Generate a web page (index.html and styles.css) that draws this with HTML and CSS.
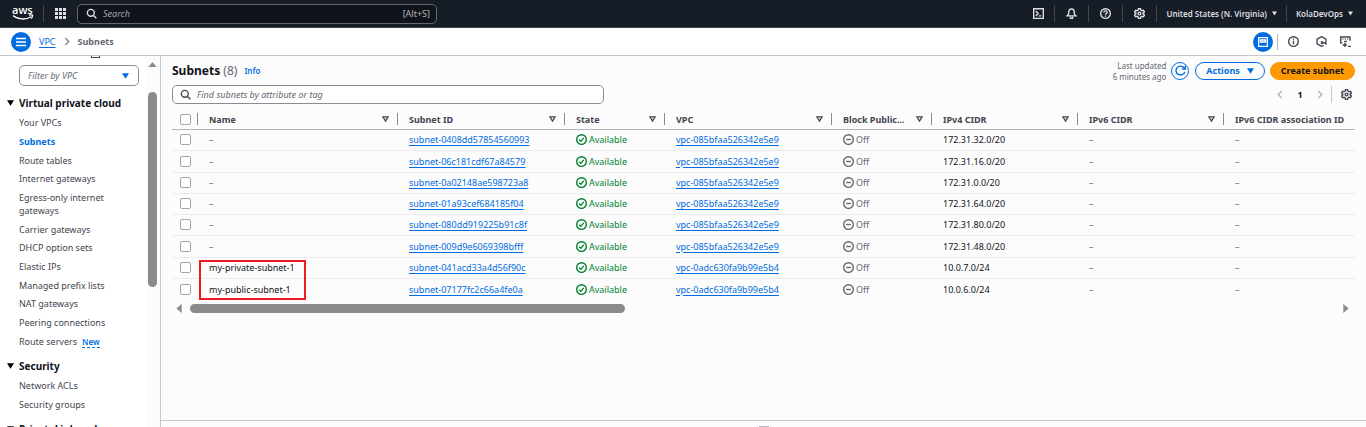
FILE: index.html
```html
<!DOCTYPE html>
<html lang="en">
<head>
<meta charset="utf-8">
<title>Subnets | VPC Console</title>
<link rel="stylesheet" href="styles.css">
</head>
<body>
<svg class="defs" aria-hidden="true">
  <symbol id="search" viewBox="0 0 16 16"><circle cx="7" cy="7" r="5"/><path d="M11 11l4 4"/></symbol>
  <symbol id="gear" viewBox="0 0 16 16"><path d="M6.500 1h3l.5 2 1.800 1 2-.6 1.500 2.600L13.300 7.500v1L15.300 10l-1.500 2.600-2-.6L10 13l-.5 2h-3l-.5-2-1.800-1-2 .6L.7 10l2-1.500v-1L.7 6l1.500-2.600 2 .6L6 3z"/><circle cx="8" cy="8" r="2"/></symbol>
  <symbol id="down" viewBox="0 0 10 8"><path d="M0 0h10L5 8z"/></symbol>
  <symbol id="filter" viewBox="0 0 16 14"><path d="M2 2h12L8 12z"/></symbol>
  <symbol id="ok" viewBox="0 0 16 16"><circle cx="8" cy="8" r="7"/><path d="M4.500 8.200l2.500 2.500 4.300-5"/></symbol>
  <symbol id="off" viewBox="0 0 16 16"><circle cx="8" cy="8" r="7"/><path d="M4.500 8h7"/></symbol>
  <symbol id="next" viewBox="0 0 16 16"><path d="M4.500 1l7 7-7 7"/></symbol>
  <symbol id="prev" viewBox="0 0 16 16"><path d="M11.500 1l-7 7 7 7"/></symbol>
</svg>

<header class="topbar">
  <a class="logo" href="#" aria-label="AWS home">
    <svg viewBox="0 0 22 16"><text x="0" y="9">aws</text><path class="smile" d="M1 10.500c5 4.300 13 4.500 18 1.200"/><path class="smile" d="M17 10.200c2.200-.5 3.800-.4 3.600.2s-.3 2.200-1.300 3.200"/></svg>
  </a>
  <button class="apps" aria-label="Services"><svg viewBox="0 0 11 11"><path d="M0 0h3v3H0zM4 0h3v3H4zM8 0h3v3H8zM0 4h3v3H0zM4 4h3v3H4zM8 4h3v3H8zM0 8h3v3H0zM4 8h3v3H4zM8 8h3v3H8z"/></svg></button>
  <div class="global-search">
    <svg class="ico"><use href="#search"/></svg>
    <input type="search" placeholder="Search" aria-label="Search">
    <kbd>[Alt+S]</kbd>
  </div>
  <nav class="tools" aria-label="Account">
    <button class="tool" aria-label="CloudShell"><svg class="ico" viewBox="0 0 16 16"><path d="M1 1h14v14H1zM4 4.500L7.500 8 4 11.500M8.500 11.500H12"/></svg></button>
    <button class="tool" aria-label="Notifications"><svg class="ico" viewBox="0 0 16 16"><path d="M8 1.500c-3 0-4 2-4 4.500v2.500L1.500 11.500h13L12 8.500V6c0-2.500-1-4.500-4-4.500z"/><path d="M6.500 12.500v2.500h3v-2.500"/></svg></button>
    <button class="tool" aria-label="Help"><svg class="ico" viewBox="0 0 16 16"><circle cx="8" cy="8" r="7"/><path d="M5.500 6.500C5.500 3.500 10.500 3.500 10.500 6.500c0 1.500-2.500 1.700-2.500 3.300M8 11v1.800"/></svg></button>
    <button class="tool" aria-label="Settings"><svg class="ico"><use href="#gear"/></svg></button>
    <button class="tool wide">United States (N. Virginia)<svg class="caret"><use href="#down"/></svg></button>
    <button class="tool wide">KolaDevOps<svg class="caret"><use href="#down"/></svg></button>
  </nav>
</header>

<div class="crumbbar">
  <button class="round" aria-label="Toggle navigation"><svg viewBox="0 0 10 10"><path d="M0 1.500h10M0 5h10M0 8.500h10"/></svg></button>
  <nav class="crumbs" aria-label="Breadcrumb">
    <a href="#">VPC</a>
    <svg class="chev"><use href="#next"/></svg>
    <span>Subnets</span>
  </nav>
  <div class="panels">
    <button class="round" aria-label="Split panel"><svg viewBox="0 0 10 10"><path d="M.5.500h9v9h-9zM2.500 3h5v2h-5z"/></svg></button>
    <button class="panel first" aria-label="Info"><svg class="ico" viewBox="0 0 16 16"><circle cx="8" cy="8" r="7"/><path d="M8 7v5M8 3.800v1.700"/></svg></button>
    <button class="panel" aria-label="Assistant"><svg class="ico" viewBox="0 0 16 16"><path d="M11 13.500L8 15l-6.500-3.500v-7L8 1l6.500 3.500v7L8 8"/><path d="M8 8v3l3-1"/></svg></button>
    <button class="panel" aria-label="Tutorials"><svg class="ico" viewBox="0 0 16 16"><path d="M3.500 10H1V1.500h13.500V7M3.500 4.500h1.500M7 4.500h1.500M10.500 4.500H12M6 8h4M4 13h4.500M6.500 10.500L9 13l-2.500 2.500M11.500 15H16"/></svg></button>
  </div>
</div>

<div class="layout">
  <aside class="sidebar">
    <div class="side-content">
      <div class="cut-icon"></div>
      <div class="vpc-filter">
        <select aria-label="Filter by VPC"><option>Filter by VPC</option></select>
        <svg><use href="#down"/></svg>
      </div>
      <h2><svg><use href="#down"/></svg>Virtual private cloud</h2>
      <ul>
        <li><a href="#">Your VPCs</a></li>
        <li><a href="#" class="current">Subnets</a></li>
        <li><a href="#">Route tables</a></li>
        <li><a href="#">Internet gateways</a></li>
        <li><a href="#">Egress-only internet gateways</a></li>
        <li><a href="#">Carrier gateways</a></li>
        <li><a href="#">DHCP option sets</a></li>
        <li><a href="#">Elastic IPs</a></li>
        <li><a href="#">Managed prefix lists</a></li>
        <li><a href="#">NAT gateways</a></li>
        <li><a href="#">Peering connections</a></li>
        <li><a href="#">Route servers</a><a href="#" class="new">New</a></li>
      </ul>
      <h2><svg><use href="#down"/></svg>Security</h2>
      <ul>
        <li><a href="#">Network ACLs</a></li>
        <li><a href="#">Security groups</a></li>
      </ul>
      <h2><svg><use href="#down"/></svg>PrivateLink and</h2>
    </div>
    <div class="vscroll"><svg viewBox="0 0 10 6"><path d="M0 6h10L5 0z"/></svg><i></i></div>
  </aside>

  <div class="column">
    <main class="main">
      <div class="head">
        <h1>Subnets <span>(8)</span></h1>
        <a class="info" href="#">Info</a>
        <p class="updated">Last updated<br>6 minutes ago</p>
        <button class="refresh" aria-label="Refresh"><svg class="ico" viewBox="0 0 16 16"><path d="M14.200 10A6.500 6.500 0 1 1 13.200 4.200L14.500 6M15 1v5h-5"/></svg></button>
        <button class="btn">Actions<svg class="caret"><use href="#down"/></svg></button>
        <button class="btn primary">Create subnet</button>
      </div>
      <div class="controls">
        <div class="find">
          <svg class="ico"><use href="#search"/></svg>
          <input type="search" placeholder="Find subnets by attribute or tag" aria-label="Find subnets">
        </div>
        <div class="pager">
          <button aria-label="Previous page"><svg class="chev"><use href="#prev"/></svg></button>
          <button class="page">1</button>
          <button aria-label="Next page"><svg class="chev"><use href="#next"/></svg></button>
          <button class="prefs" aria-label="Preferences"><svg class="ico"><use href="#gear"/></svg></button>
        </div>
      </div>
      <div class="table-wrap">
        <table>
          <colgroup><col class="c-check"><col class="c-name"><col class="c-id"><col class="c-state"><col class="c-vpc"><col class="c-block"><col class="c-cidr"><col class="c-cidr"><col></colgroup>
          <thead><tr>
            <th><input type="checkbox" aria-label="Select all"></th>
            <th><div>Name<svg><use href="#filter"/></svg></div></th>
            <th><div>Subnet ID<svg><use href="#filter"/></svg></div></th>
            <th><div>State<svg><use href="#filter"/></svg></div></th>
            <th><div>VPC<svg><use href="#filter"/></svg></div></th>
            <th><div>Block Public...<svg><use href="#filter"/></svg></div></th>
            <th><div>IPv4 CIDR<svg><use href="#filter"/></svg></div></th>
            <th><div>IPv6 CIDR<svg><use href="#filter"/></svg></div></th>
            <th><div>IPv6 CIDR association ID</div></th>
          </tr></thead>
          <tbody>
            <tr><td><input type="checkbox" aria-label="Select row 1"></td><td class="none">–</td><td><a href="#">subnet-0408dd57854560993</a></td><td><span class="status ok"><svg class="ico"><use href="#ok"/></svg>Available</span></td><td><a href="#">vpc-085bfaa526342e5e9</a></td><td><span class="status"><svg class="ico"><use href="#off"/></svg>Off</span></td><td>172.31.32.0/20</td><td class="none">–</td><td class="none">–</td></tr>
            <tr><td><input type="checkbox" aria-label="Select row 2"></td><td class="none">–</td><td><a href="#">subnet-06c181cdf67a84579</a></td><td><span class="status ok"><svg class="ico"><use href="#ok"/></svg>Available</span></td><td><a href="#">vpc-085bfaa526342e5e9</a></td><td><span class="status"><svg class="ico"><use href="#off"/></svg>Off</span></td><td>172.31.16.0/20</td><td class="none">–</td><td class="none">–</td></tr>
            <tr><td><input type="checkbox" aria-label="Select row 3"></td><td class="none">–</td><td><a href="#">subnet-0a02148ae598723a8</a></td><td><span class="status ok"><svg class="ico"><use href="#ok"/></svg>Available</span></td><td><a href="#">vpc-085bfaa526342e5e9</a></td><td><span class="status"><svg class="ico"><use href="#off"/></svg>Off</span></td><td>172.31.0.0/20</td><td class="none">–</td><td class="none">–</td></tr>
            <tr><td><input type="checkbox" aria-label="Select row 4"></td><td class="none">–</td><td><a href="#">subnet-01a93cef684185f04</a></td><td><span class="status ok"><svg class="ico"><use href="#ok"/></svg>Available</span></td><td><a href="#">vpc-085bfaa526342e5e9</a></td><td><span class="status"><svg class="ico"><use href="#off"/></svg>Off</span></td><td>172.31.64.0/20</td><td class="none">–</td><td class="none">–</td></tr>
            <tr><td><input type="checkbox" aria-label="Select row 5"></td><td class="none">–</td><td><a href="#">subnet-080dd919225b91c8f</a></td><td><span class="status ok"><svg class="ico"><use href="#ok"/></svg>Available</span></td><td><a href="#">vpc-085bfaa526342e5e9</a></td><td><span class="status"><svg class="ico"><use href="#off"/></svg>Off</span></td><td>172.31.80.0/20</td><td class="none">–</td><td class="none">–</td></tr>
            <tr><td><input type="checkbox" aria-label="Select row 6"></td><td class="none">–</td><td><a href="#">subnet-009d9e6069398bfff</a></td><td><span class="status ok"><svg class="ico"><use href="#ok"/></svg>Available</span></td><td><a href="#">vpc-085bfaa526342e5e9</a></td><td><span class="status"><svg class="ico"><use href="#off"/></svg>Off</span></td><td>172.31.48.0/20</td><td class="none">–</td><td class="none">–</td></tr>
            <tr><td><input type="checkbox" aria-label="Select row 7"></td><td>my-private-subnet-1</td><td><a href="#">subnet-041acd33a4d56f90c</a></td><td><span class="status ok"><svg class="ico"><use href="#ok"/></svg>Available</span></td><td><a href="#">vpc-0adc630fa9b99e5b4</a></td><td><span class="status"><svg class="ico"><use href="#off"/></svg>Off</span></td><td>10.0.7.0/24</td><td class="none">–</td><td class="none">–</td></tr>
            <tr><td><input type="checkbox" aria-label="Select row 8"></td><td>my-public-subnet-1</td><td><a href="#">subnet-07177fc2c66a4fe0a</a></td><td><span class="status ok"><svg class="ico"><use href="#ok"/></svg>Available</span></td><td><a href="#">vpc-0adc630fa9b99e5b4</a></td><td><span class="status"><svg class="ico"><use href="#off"/></svg>Off</span></td><td>10.0.6.0/24</td><td class="none">–</td><td class="none">–</td></tr>
          </tbody>
        </table>
        <div class="highlight"></div>
      </div>
      <div class="hscroll"><svg viewBox="0 0 6 10"><path d="M6 0v10L0 5z"/></svg><span><i></i></span><svg viewBox="0 0 6 10"><path d="M0 0v10l6-5z"/></svg></div>
    </main>
    <div class="split"><i></i></div>
  </div>
</div>
</body>
</html>
```

FILE: styles.css
```css
* { box-sizing: border-box; }
body {
  margin: 0;
  height: 100vh;
  overflow: hidden;
  display: flex;
  flex-direction: column;
  background: #fff;
  color: #0f141a;
  font: 9px/13px "Noto Sans", "Open Sans", sans-serif;
}
button, input, select { font: inherit; color: inherit; }
button { border: 0; padding: 0; background: none; display: flex; align-items: center; justify-content: center; }
a { color: #006ce0; }
h1, h2, p, ul { margin: 0; padding: 0; }
ul { list-style: none; }
svg { display: block; flex: none; }
.defs { position: absolute; width: 0; height: 0; }
.ico { width: 11px; height: 11px; fill: none; stroke: currentColor; stroke-width: 2; }
.chev { width: 8px; height: 9px; fill: none; stroke: #8c8c94; stroke-width: 3; overflow: visible; }
.caret { width: 7px; height: 6px; fill: currentColor; }
input[type="search"] { appearance: none; flex: 1; min-width: 0; border: 0; padding: 0; background: none; outline: 0; }
input::placeholder { color: #656871; font-style: italic; opacity: 1; }

/* Top bar */
.topbar { flex: none; display: flex; align-items: center; height: 28px; background: #161d26; border-bottom: 1px solid #424650; color: #dedee3; }
.logo { width: 44px; height: 17px; padding-left: 12px; border-right: 1px solid #424650; }
.logo svg { width: 22px; height: 16px; overflow: visible; }
.logo text { font: 600 11px "Open Sans", sans-serif; fill: #fff; }
.smile { fill: none; stroke: #fff; stroke-width: 1.300; }
.apps { width: 33px; }
.apps svg { width: 11px; height: 11px; fill: #dedee3; }
.global-search { width: 360px; height: 20px; display: flex; align-items: center; gap: 6px; padding: 0 6px 0 8px; border: 1px solid #656871; border-radius: 5px; background: #0f141a; }
.global-search input::placeholder { color: #a4a4ad; }
.global-search kbd { font: inherit; color: #b4b4bb; }
.tools { margin-left: auto; display: flex; padding-right: 13px; }
.tool { width: 34px; height: 17px; border-left: 1px solid #424650; font-weight: 600; }
.tool:first-child { width: 32px; border-left: 0; }
.tool.wide { width: auto; gap: 5px; padding: 0 9px; font-size: 8px; }
.tool.wide:last-child { padding-right: 0; }
.tool .caret { width: 5px; height: 5px; }

/* Breadcrumb bar */
.crumbbar { flex: none; height: 28px; display: flex; align-items: center; padding: 0 15px 0 11px; border-bottom: 1px solid #c6c6cd; }
.round { flex: none; width: 20px; height: 20px; border-radius: 50%; background: #006ce0; }
.round svg { width: 10px; height: 10px; fill: none; stroke: #fff; stroke-width: 1.500; }
.crumbs { display: flex; align-items: center; gap: 7px; padding-left: 8px; }
.crumbs a { text-underline-offset: 2px; }
.crumbs span { color: #656871; font-weight: 700; }
.panels { margin-left: auto; display: flex; align-items: center; color: #424650; }
.panel { width: 26px; height: 16px; }
.panel:last-child { width: 11px; margin-left: 6px; }
.panel.first { width: 31px; margin-left: 4px; border-left: 1px solid #b4b4bb; }

/* Side navigation */
.layout { flex: 1; min-height: 0; display: flex; }
.sidebar { flex: none; width: 161px; display: flex; border-right: 1px solid #c6c6cd; overflow: hidden; }
.side-content { flex: 1; padding: 0 7px 0 19px; min-width: 0; }
.cut-icon { width: 9px; height: 2px; margin: 0 0 7px 72px; border: 1px solid #424650; border-top: 0; }
.vpc-filter { display: flex; align-items: center; height: 21px; border: 1px solid #8c8c94; border-radius: 5px; padding: 0 9px 0 8px; }
.vpc-filter select { flex: 1; appearance: none; border: 0; padding: 0; background: none; font-style: italic; color: #656871; }
.vpc-filter svg { width: 7px; height: 6px; fill: #006ce0; }
.sidebar h2 { display: flex; align-items: center; gap: 5px; margin: 10px 0 6px -12px; white-space: nowrap; font-size: 10px; line-height: 14px; }
.sidebar ul + h2 { margin-top: 11px; }
.sidebar h2 svg { width: 7px; height: 6px; }
.sidebar li { margin-bottom: 6px; }
.sidebar li:nth-child(3n) { margin-bottom: 5px; }
.sidebar li a { color: #424650; text-decoration: none; }
.sidebar li .current { color: #006ce0; font-weight: 700; }
.sidebar li .new { margin-left: 5px; color: #006ce0; font-size: 8px; font-weight: 600; border-bottom: 1px dashed #006ce0; }
.vscroll { width: 14px; padding: 6px 2px 0; background: #fcfcfc; }
.vscroll svg { width: 9px; height: 5px; fill: #8b8b8b; }
.vscroll i { display: block; width: 9px; height: 195px; margin-top: 25px; border-radius: 5px; background: #8b8b8b; }

/* Subnet list */
.column { flex: 1; min-width: 0; display: flex; flex-direction: column; background: #fcfcfc; }
.main { flex: 1; padding: 5px 11px 0; }
.head { display: flex; align-items: center; height: 19px; }
h1 { font-size: 12px; line-height: 18px; }
h1 span { color: #656871; font-weight: 400; }
.info { margin-left: 7px; font-size: 8px; font-weight: 600; text-decoration: none; }
.updated { margin-left: auto; font-size: 8px; line-height: 11px; text-align: right; color: #656871; }
.refresh { width: 18px; height: 18px; margin: 0 6px 0 5px; border: 1px solid #006ce0; border-radius: 50%; color: #006ce0; }
.btn { height: 18px; padding: 0 10px; gap: 7px; border: 1px solid #006ce0; border-radius: 9px; color: #006ce0; font-weight: 700; }
.btn.primary { margin-left: 5px; border-color: #ff9900; background: #ff9900; color: #0f141a; }
.controls { display: flex; align-items: center; justify-content: space-between; margin-top: 5px; }
.find { width: 432px; height: 19px; display: flex; align-items: center; gap: 6px; padding: 0 7px; border: 1px solid #8c8c94; border-radius: 5px; background: #fff; color: #424650; }
.pager { display: flex; align-items: center; height: 17px; gap: 13px; padding-right: 3px; }
.page { width: 6px; font-weight: 700; }
.pager .chev { stroke: #b4b4bb; }
.pager .prefs { height: 17px; margin-left: -6px; padding-left: 9px; border-left: 1px solid #c6c6cd; color: #424650; }
.table-wrap { position: relative; margin-top: 5px; }
table { width: 100%; table-layout: fixed; border-collapse: separate; border-spacing: 0; }
.c-check { width: 26px; }
.c-name { width: 200px; }
.c-id { width: 167px; }
.c-state { width: 100px; }
.c-vpc { width: 167px; }
.c-block { width: 100px; }
.c-cidr { width: 146px; }
th, td { padding: 0 0 0 11px; text-align: left; white-space: nowrap; border-bottom: 1px solid #ebebf0; vertical-align: middle; }
th:first-child, td:first-child { padding-left: 8px; }
th { height: 21px; padding-left: 0; border-color: #b4b4bb; color: #424650; }
th div { display: flex; align-items: center; justify-content: space-between; height: 12px; padding: 0 9px 0 11px; }
th:not(:last-child) div, th:first-child { background: linear-gradient(#8c8c94, #8c8c94) right center / 1px 12px no-repeat; }
th svg { width: 7px; height: 6px; fill: none; stroke: #424650; stroke-width: 3; }
td { height: 21px; padding-bottom: 1px; }
tr:nth-child(4n+2) td { height: 22px; }
tbody tr:last-child td { border-bottom: 0; }
td a { text-underline-offset: 2px; }
.none { color: #8c8c94; font-weight: 600; }
input[type="checkbox"] { appearance: none; display: block; width: 11px; height: 11px; margin: 0; border: 1px solid #a4a4ad; border-radius: 2px; background: #fff; }
.status { display: flex; align-items: center; gap: 2px; color: #656871; }
.status.ok { color: #00802f; }
.highlight { position: absolute; left: 27px; bottom: 0; width: 107px; height: 40px; border: 2px solid #ed1c24; }
.hscroll { display: flex; align-items: center; gap: 8px; margin-top: 4px; padding: 0 6px 0 4px; }
.hscroll svg { width: 6px; height: 9px; fill: #8b8b8b; }
.hscroll span { flex: 1; }
.hscroll i { display: block; width: 38%; height: 9px; border-radius: 5px; background: #8b8b8b; }
.split { flex: none; height: 7px; display: flex; justify-content: center; align-items: flex-end; border-top: 1px solid #c6c6cd; }
.split i { width: 10px; height: 1px; background: #b4b4bb; }
```
